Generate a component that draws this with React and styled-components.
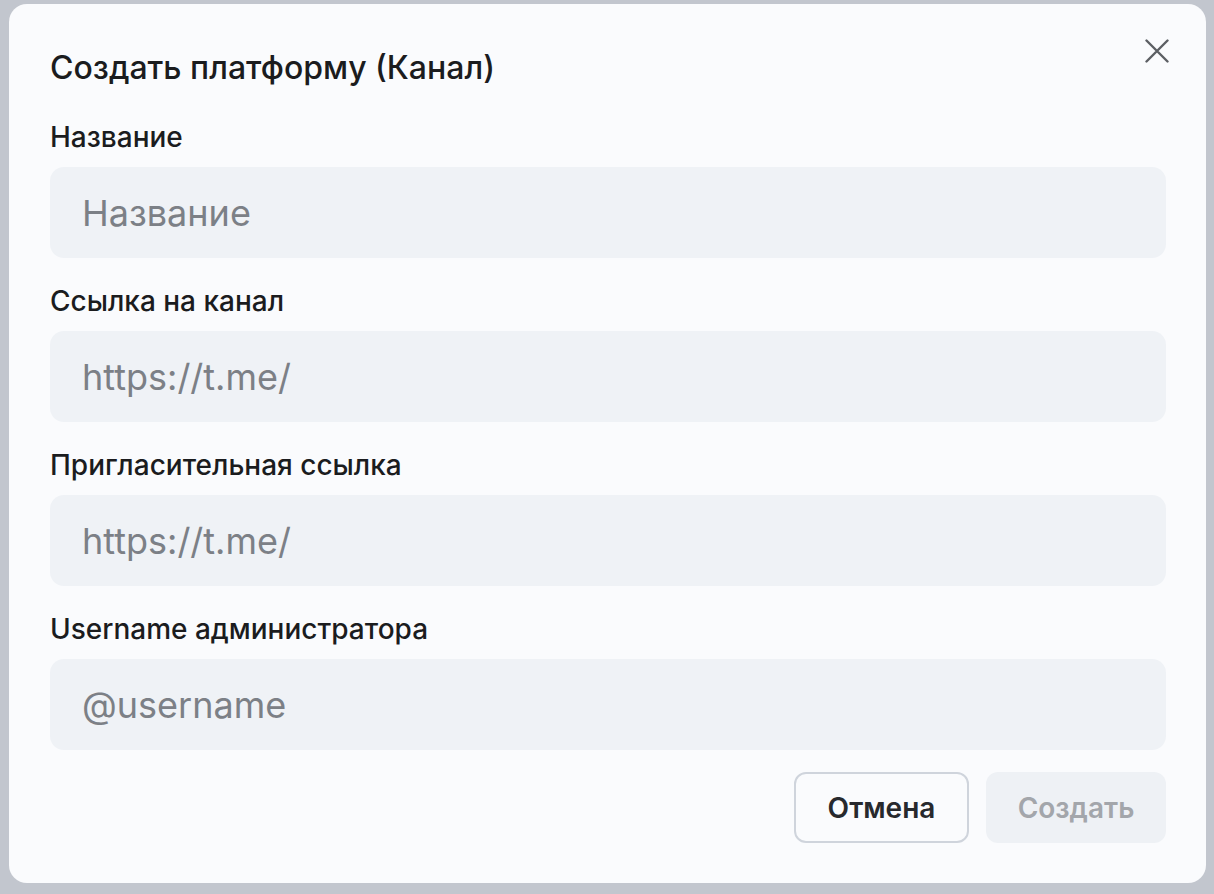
import React from 'react';
import styled, { createGlobalStyle } from 'styled-components';

const GlobalStyle = createGlobalStyle`
  html, body {
    margin: 0;
    padding: 0;
    background: #c2c6ce;
    font-family: Inter, "Noto Sans", sans-serif;
  }
`;

const Backdrop = styled.div`
  width: 1214px;
  height: 894px;
  padding: 4px 8px 11px 9px;
  box-sizing: border-box;
  display: flex;
`;

const Modal = styled.div`
  flex: 1;
  position: relative;
  background: #fafbfd;
  border-radius: 18px;
  padding: 44px 40px 40px 41px;
  display: flex;
  flex-direction: column;
  box-sizing: border-box;
`;

const Title = styled.h2`
  margin: 0 0 32px;
  font-size: 32px;
  font-weight: 500;
  line-height: 40px;
  color: #1b1c1e;
`;

const CloseButton = styled.button`
  position: absolute;
  top: 35px;
  right: 37px;
  width: 24px;
  height: 24px;
  border: none;
  background: transparent;
  padding: 0;
  display: flex;
  color: #5c5f64;
`;

const Fields = styled.div`
  display: flex;
  flex-direction: column;
  gap: 26px;
`;

const Field = styled.div`
  display: flex;
  flex-direction: column;
`;

const Label = styled.label`
  font-size: 28px;
  font-weight: 500;
  line-height: 34px;
  color: #1b1c1e;
  margin-bottom: 13px;
`;

const Input = styled.input`
  height: 91px;
  box-sizing: border-box;
  border: none;
  outline: none;
  border-radius: 14px;
  background: #eff2f6;
  padding: 0 32px;
  font-family: inherit;
  font-size: 36px;
  color: #1b1c1e;
  &::placeholder {
    color: #7c8086;
  }
`;

const Footer = styled.div`
  display: flex;
  justify-content: flex-end;
  gap: 17px;
  margin-top: 22px;
`;

const Button = styled.button`
  height: 71px;
  box-sizing: border-box;
  border-radius: 12px;
  font-family: inherit;
  font-size: 28px;
  font-weight: 600;
  padding: 0;
  width: ${(p) => p.$width}px;
  border: ${(p) => (p.$outline ? '2px solid #cfd4dc' : 'none')};
  background: ${(p) => (p.$outline ? '#fafbfd' : '#eef1f5')};
  color: ${(p) => (p.$outline ? '#27292d' : '#a3a6ab')};
`;

const fields = [
  { label: 'Название', placeholder: 'Название' },
  { label: 'Ссылка на канал', placeholder: 'https://t.me/' },
  { label: 'Пригласительная ссылка', placeholder: 'https://t.me/' },
  { label: 'Username администратора', placeholder: '@username' },
];

export default function App() {
  return (
    <>
      <GlobalStyle />
      <Backdrop>
        <Modal>
          <Title>Создать платформу (Канал)</Title>
          <CloseButton aria-label="close">
            <svg width="24" height="24" viewBox="0 0 24 24" fill="none" stroke="currentColor" strokeWidth="2.4" strokeLinecap="round">
              <path d="M1.5 1.5L22.5 22.5M22.5 1.5L1.5 22.5" />
            </svg>
          </CloseButton>
          <Fields>
            {fields.map((f, i) => (
              <Field key={i}>
                <Label>{f.label}</Label>
                <Input placeholder={f.placeholder} />
              </Field>
            ))}
          </Fields>
          <Footer>
            <Button $outline $width={175}>Отмена</Button>
            <Button $width={180} disabled>Создать</Button>
          </Footer>
        </Modal>
      </Backdrop>
    </>
  );
}
